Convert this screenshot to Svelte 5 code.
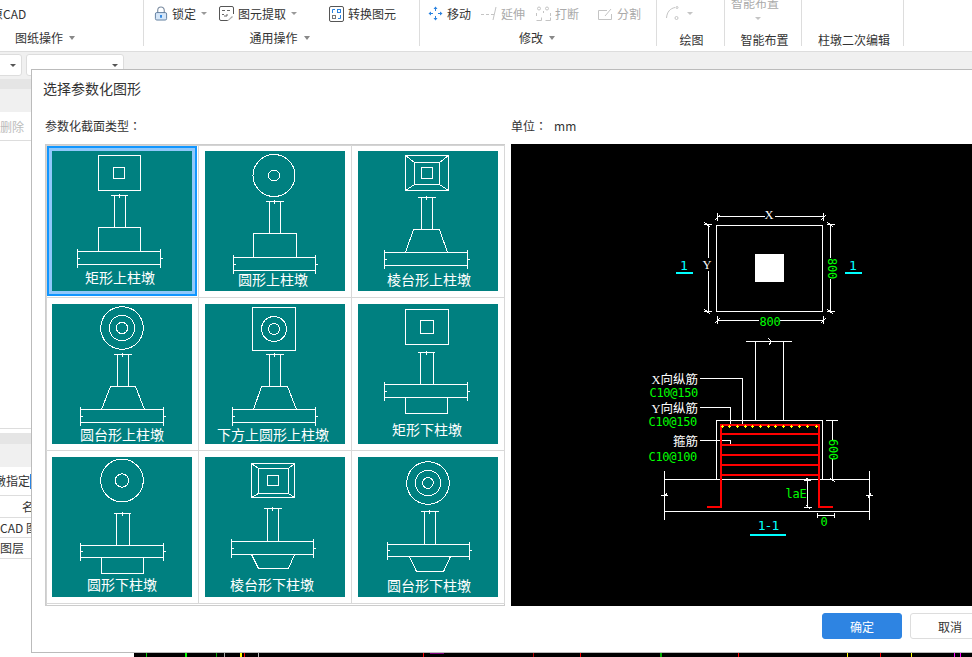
<script>
  const p = (v) => Math.floor(v) + 0.5;
  const rect = (x1, y1, x2, y2) => `M${p(x1)} ${p(y1)}H${p(x2)}V${p(y2)}H${p(x1)}Z`;
  const slab = (x1, x2, y1, y2) => {
    const m = p((y1 + y2) / 2 + 0.5);
    return (
      rect(x1, y1, x2, y2) +
      `M${p(x1)} ${p(y1 - 3)}V${p(y2 + 3)}M${p(x2)} ${p(y1 - 3)}V${p(y2 + 3)}` +
      `M${p(x1 - 1)} ${m}H${p(x1 + 2)}M${p(x2 - 1)} ${m}H${p(x2 + 2)}`
    );
  };
  const col = (a, b, t, e, d1, d2) => {
    const m = p((d1 + d2) / 2);
    return `M${p(d1)} ${p(t)}H${p(d2)}M${p(a)} ${p(t)}V${p(e)}M${p(b)} ${p(t)}V${p(e)}M${m} ${p(t - 2)}V${p(t + 2)}`;
  };
  const trap = (a, b, t, c, d, e, closed) =>
    `M${p(c)} ${p(e)}L${p(a)} ${p(t)}H${p(b)}L${p(d)} ${p(e)}${closed ? 'Z' : ''}`;
  const diag = (o, m) =>
    `M${p(o[0])} ${p(o[1])}L${p(m[0])} ${p(m[1])}M${p(o[2])} ${p(o[1])}L${p(m[2])} ${p(m[1])}` +
    `M${p(o[0])} ${p(o[3])}L${p(m[0])} ${p(m[3])}M${p(o[2])} ${p(o[3])}L${p(m[2])} ${p(m[3])}`;

  const cells = [
    { t: '矩形上柱墩', x: 68, y: 132, c: [],
      d: rect(46, 4, 88, 39) + rect(61, 16, 72, 27) + col(62.7, 73.3, 44, 76, 58.7, 75.7) + rect(46, 76, 88, 100) + slab(25, 108, 100, 113) },
    { t: '圆形上柱墩', x: 68, y: 134, c: [[69, 24.5, 21], [69, 24.5, 5.5]],
      d: col(64.3, 75.3, 50, 82, 60.3, 78.7) + rect(48, 82, 91, 106) + slab(28, 110, 106, 119) },
    { t: '棱台形上柱墩', x: 71, y: 134, c: [],
      d: rect(47, 4, 90, 39) + rect(56, 11, 81, 33) + rect(63, 16, 74, 27) + diag([47, 4, 90, 39], [56, 11, 81, 33]) +
        col(63.3, 74.3, 46, 78, 59, 77) + trap(55.3, 81.7, 78, 47.3, 89.7, 101) + slab(26, 109, 101, 114) },
    { t: '圆台形上柱墩', x: 70, y: 136, c: [[70, 24, 21.3], [70, 24, 12.7], [70, 24, 5.7]],
      d: col(65.3, 76.3, 50, 82, 61.3, 79.3) + trap(58.7, 83.7, 82, 49.3, 92.7, 105) + slab(28, 111, 105, 118) },
    { t: '下方上圆形上柱墩', x: 68, y: 136, c: [[69, 25, 12.5], [69, 25, 5.5]],
      d: rect(47, 3, 90, 46) + col(64.3, 75.3, 50, 82, 60.3, 78.7) + trap(56.7, 82, 82, 48.3, 91.7, 105) + slab(27, 110, 105, 118) },
    { t: '矩形下柱墩', x: 69, y: 131, c: [],
      d: rect(47, 5, 90, 40) + rect(62, 16, 75, 29) + col(62.3, 75.7, 48, 80, 59.3, 76.7) + slab(26, 109, 80, 93) + rect(47, 93, 89, 109) },
    { t: '圆形下柱墩', x: 70, y: 133, c: [[70, 23.5, 21.3], [70, 23.5, 6.7]],
      d: col(64.3, 77.3, 56, 88, 61.3, 78.7) + slab(28, 111, 88, 100) + rect(49, 100, 91, 116) },
    { t: '棱台形下柱墩', x: 67, y: 133, c: [],
      d: rect(46, 6, 89, 40) + rect(53, 11, 83, 36) + rect(62, 18, 73, 28) + diag([46, 6, 89, 40], [53, 11, 83, 36]) +
        col(62.3, 73.3, 51, 84, 58.3, 76.7) + slab(26, 108, 84, 97) + trap(46.3, 89.7, 97, 53.3, 83.3, 111, true) },
    { t: '圆台形下柱墩', x: 71, y: 134, c: [[70, 26, 21.3], [70, 26, 12.7], [70, 26, 5.3]],
      d: col(66.3, 77.7, 54, 87, 62.3, 80.3) + slab(29, 111, 87, 99) + trap(51.3, 92.7, 99, 58.3, 85, 114, true) }
  ];

  const dots = [247, 268, 292, 316, 337, 361, 385, 406, 430, 454, 478, 502, 529].map((v) => Math.round(640 + v / 3));
  const stirrups = [434, 445, 455, 465, 475];
  const marks = [
    [146, '#0c0', 1], [185, '#0f0', 2], [216, '#0a0', 1], [224, '#aaa', 1], [240, '#ff0', 2], [244, '#f00', 1], [258, '#bbb', 1],
    [423, '#f00', 1], [533, '#b00', 1], [580, '#f00', 1], [660, '#0a0', 2], [738, '#f00', 1], [847, '#ff0', 1], [880, '#f00', 1],
    [911, '#ff0', 1], [954, '#f0f', 1], [960, '#f0f', 1]
  ];
</script>

<div class="page">
  <header class="ribbon">
    <section class="group g1">
      <div class="row"><span class="cad">原CAD</span></div>
      <div class="label">图纸操作<i class="caret"></i></div>
    </section>

    <section class="group g2">
      <div class="row">
        <svg class="ic" width="14" height="17" viewBox="0 0 15 17">
          <path d="M4 8V5a3.500 3.500 0 0 1 7 0v3" fill="none" stroke="#7a8ba0" stroke-width="1.200" />
          <rect x="1.500" y="7.500" width="12" height="8" rx="1.500" fill="#d5e6f8" stroke="#5c7b9c" />
          <path d="M7.500 10v3" stroke="#2a83e0" stroke-width="2" />
        </svg>
        <span class="tx">锁定</span><i class="caret sm"></i>
        <svg class="ic m12" width="15" height="16" viewBox="0 0 15 16">
          <path d="M9 14.500H2a1.500 1.500 0 0 1-1.500-1.500V2A1.500 1.500 0 0 1 2 .5h11A1.500 1.500 0 0 1 14.500 2v6" fill="none" stroke="#555" />
          <path d="M3 4.500h3M8 4.500h3M3 8.500h2M8 8v2H5" fill="none" stroke="#666" />
          <path d="M8 15l5-5 1 1-5 4z" fill="#aaa" />
        </svg>
        <span class="tx">图元提取</span><i class="caret sm"></i>
        <svg class="ic m32" width="15" height="16" viewBox="0 0 15 16">
          <rect x=".5" y=".5" width="14" height="15" rx="1.500" fill="none" stroke="#555" />
          <rect x="8.500" y="3.500" width="3" height="3" fill="none" stroke="#2a83e0" />
          <rect x="3.500" y="9.500" width="3" height="3" fill="none" stroke="#777" />
          <path d="M3.500 7V3.500H6M11.500 9v3.500H9" fill="none" stroke="#2a83e0" />
        </svg>
        <span class="tx">转换图元</span>
      </div>
      <div class="label">通用操作<i class="caret"></i></div>
    </section>

    <section class="group g3">
      <div class="row">
        <svg class="ic" width="15" height="15" viewBox="0 0 15 15" fill="none" stroke="#2a83e0">
          <path d="M7.500 3v2M7.500 10v2M3 7.500h2M10 7.500h2" />
          <path d="M7.500 .5l2 2.500h-4zM7.500 14.500l2-2.500h-4zM.5 7.500L3 5.500v4zM14.500 7.500L12 5.500v4z" fill="#2a83e0" stroke="none" />
        </svg>
        <span class="tx">移动</span>
        <svg class="ic m10" width="16" height="15" viewBox="0 0 16 15" fill="none" stroke="#c4c4c4">
          <path d="M0 8.500h3M5 8.500h3M10 8.500h3M15 1l-3 13" />
        </svg>
        <span class="tx off">延伸</span>
        <svg class="ic m11" width="15" height="15" viewBox="0 0 15 15" fill="none" stroke="#c4c4c4">
          <circle cx="3" cy="2.500" r="1.500" /><circle cx="11" cy="2.500" r="1.500" />
          <path d="M.5 10v-3M.5 14.500h5v-3M14.500 10v-3M9.500 14.500h5v-3M7.500 5v2" />
        </svg>
        <span class="tx off">打断</span>
        <svg class="ic m20" width="15" height="14" viewBox="0 0 15 14" fill="none" stroke="#c4c4c4">
          <path d="M9 3.500H.5v9h13V7M7 9l6-7" />
        </svg>
        <span class="tx off">分割</span>
      </div>
      <div class="label">修改<i class="caret"></i></div>
    </section>

    <section class="group g4">
      <div class="row">
        <svg class="ic" width="15" height="15" viewBox="0 0 15 15" fill="none" stroke="#c4c4c4">
          <path d="M1.500 12C2 6 5 2.500 10 1.500" /><circle cx="12" cy="1.500" r="1" /><circle cx="11.500" cy="12" r="1.500" />
        </svg>
        <i class="caret sm off m7"></i>
      </div>
      <div class="label low">绘图</div>
    </section>

    <section class="group g5">
      <div class="row">
        <div class="stack"><span class="tx off">智能布置</span><i class="caret sm off"></i></div>
      </div>
      <div class="label low">智能布置</div>
    </section>

    <section class="group g6">
      <div class="row"></div>
      <div class="label low">柱墩二次编辑</div>
    </section>
  </header>

  <div class="band">
    <div class="select s1"><i class="caret sm dark"></i></div>
    <div class="select s2"><i class="caret sm dark"></i></div>
  </div>

  <div class="workspace">
    <aside class="side">
      <div class="bar"></div>
      <div class="sub"></div>
      <div class="action">删除</div>
      <div class="gap"></div>
      <div class="thead"></div>
      <div class="bar"></div>
      <div class="sub"></div>
      <div class="tr h1"><span class="clip">墩指定</span><b class="cursor"></b></div>
      <div class="tr h2"><span class="name">名称</span></div>
      <div class="tr h3"><span>CAD 图纸</span></div>
      <div class="tr h4"><span>图层</span></div>
    </aside>
    <div class="canvas">
      <svg class="marks" width="838" height="4" viewBox="134 653 838 4">
        {#each marks as m}
          <rect x={m[0]} y="653" width={m[2]} height="4" fill={m[1]} />
        {/each}
        <path d="M430 653h14" stroke="#f0f" />
      </svg>
    </div>
  </div>

  <div class="dialog">
    <div class="title">选择参数化图形</div>
    <div class="meta">
      <span class="type">参数化截面类型<span class="colon">：</span></span>
      <span>单位<span class="colon">：</span></span><span class="unit">mm</span>
    </div>
    <div class="body">
      <div class="grid">
        {#each cells as c, i}
          <div class="cell">
            <svg class="thumb" class:selected={i === 0} width="140" height="140" viewBox="0 0 140 140">
              <path d={c.d} fill="none" stroke="#fff" />
              {#each c.c as o}
                <circle cx={o[0]} cy={o[1]} r={o[2]} fill="none" stroke="#fff" />
              {/each}
              <text x={c.x} y={c.y} text-anchor="middle">{c.t}</text>
            </svg>
          </div>
        {/each}
      </div>

      <svg class="preview" width="461" height="462" viewBox="511 144 461 462">
        <g class="wire">
          <!-- plan -->
          <path d="M716.500 225.500H822.500V311.500H716.500Z" />
          <path d="M717.500 216.500H765M775 216.500H823.500M717.500 213V221M823.500 213V221M715 220l5-5M821 220l5-5" />
          <path d="M708.500 224V258M708.500 271V312M704 224.500H712M704 311.500H712M704 222l6 5M704 309l6 5" />
          <path d="M830.500 224V258M830.500 279V312M827 224.500H835M827 311.500H835M827 222l6 5M827 309l6 5" />
          <path d="M717.500 320.500H759M780 320.500H823.500M717.500 316V324M823.500 316V324M715 323l5-5M821 323l5-5" />
          <!-- section -->
          <path d="M746 341.500H792M755.500 341.500V420.500M783.500 341.500V420.500M768 338l3 3-2 4 2-2" />
          <path d="M716.500 479.500V420.500H822.500V479.500" />
          <path d="M664 479.500H869M664 511.500H869M664.500 471V520M869.500 471V520M661 495.500H668M866 495.500H873M667 493l-3 5M871 493l-3 5" />
          <path d="M700 378.500H742.500V426M700 407.500H730.500V425M700 440.500H730.500V445" />
          <path d="M832.500 421V440M832.500 459V479M826 420.500H838M830 478l5 4" />
          <path d="M807.500 478V508M804 480h7M804 507.500H812M806 478l4 3M806 505l4 4" />
          <path d="M817 515.500H835M817.500 513V518M834.500 513V518" />
        </g>
        <rect x="755" y="254" width="29" height="28" fill="#fff" />

        <g class="rebar">
          <path d="M707 507H721V425H819V507H833" />
          {#each stirrups as y}
            <path d="M721 {y}H819" />
          {/each}
        </g>
        {#each dots as x}
          <path class="dot" d="M{x - 1} 426.500H{x + 2}M{x + 0.5} 425V428" />
        {/each}

        <g class="cyan">
          <text x="684" y="270" text-anchor="middle">1</text>
          <text x="853" y="270" text-anchor="middle">1</text>
          <text class="tight" x="768" y="530" text-anchor="middle">1-1</text>
          <path d="M676 273H693M845 273H862M750 535H786" />
        </g>

        <g class="white-t">
          <text x="769" y="219" text-anchor="middle">X</text>
          <text x="707" y="269" text-anchor="middle">Y</text>
          <text x="698" y="384" text-anchor="end">X向纵筋</text>
          <text x="698" y="413" text-anchor="end">Y向纵筋</text>
          <text x="698" y="446" text-anchor="end">箍筋</text>
        </g>

        <g class="green">
          <text x="770" y="326" text-anchor="middle">800</text>
          <text transform="translate(828 268.500) rotate(90)" text-anchor="middle">800</text>
          <text x="698" y="397" text-anchor="end">C10@150</text>
          <text x="697" y="426" text-anchor="end">C10@150</text>
          <text x="697" y="461" text-anchor="end">C10@100</text>
          <text transform="translate(829 449.500) rotate(90)" text-anchor="middle">600</text>
          <text x="796" y="498" text-anchor="middle">laE</text>
          <text x="824" y="526" text-anchor="middle">0</text>
        </g>
      </svg>
    </div>
    <div class="footer">
      <button class="ok">确定</button>
      <button class="cancel">取消</button>
    </div>
  </div>
</div>

<style>
  :global(body) {
    margin: 0;
    overflow: hidden;
    background: #fff;
  }
  .page {
    position: relative;
    width: 972px;
    height: 657px;
    overflow: hidden;
    display: flex;
    flex-direction: column;
    font: 12px/16px "Noto Sans CJK SC", "Liberation Sans", sans-serif;
    color: #333;
  }
  .ribbon {
    display: flex;
    flex: none;
    height: 51px;
    border-bottom: 1px solid #ddd;
    background: #fff;
    overflow: hidden;
    box-sizing: content-box;
  }
  .group {
    height: 46px;
    border-right: 1px solid #ddd;
    box-sizing: border-box;
    flex: none;
  }
  .g1 { width: 144px; }
  .g2 { width: 276px; padding-left: 10px; }
  .g3 { width: 237px; padding-left: 8px; }
  .g4 { width: 68px; padding-left: 8px; }
  .g5 { width: 77px; padding-left: 6px; }
  .g6 { width: 102px; }
  .row {
    display: flex;
    align-items: center;
    height: 27px;
  }
  .cad { margin-left: -9px; }
  .ic { flex: none; margin-right: 4px; }
  .m7 { margin-left: 7px; }
  .m10 { margin-left: 10px; }
  .m11 { margin-left: 11px; }
  .m12 { margin-left: 12px; }
  .m20 { margin-left: 19px; }
  .m32 { margin-left: 32px; }
  .tx { white-space: nowrap; }
  .g2 .ic { margin-right: 4px; }
  .off { color: #aaa; }
  .stack {
    display: flex;
    flex-direction: column;
    align-items: center;
    margin-top: -13px;
  }
  .stack .caret { margin: 6px 0 0; }
  .label {
    display: flex;
    align-items: center;
    justify-content: center;
    height: 18px;
    margin-top: 2px;
    white-space: nowrap;
    color: #333;
  }
  .g1 .label { justify-content: flex-start; padding-left: 15px; }
  .g2 .label { margin-left: -14px; }
  .g3 .label { margin-left: -10px; }
  .label.low { margin-top: 4px; }
  .g4 .label { margin-left: -6px; }
  .g5 .label { margin-left: -3px; }
  .g6 .label { padding-left: 3px; }
  .caret {
    display: block;
    width: 0;
    height: 0;
    margin-left: 6px;
    border-left: 3.5px solid transparent;
    border-right: 3.5px solid transparent;
    border-top: 4px solid #888;
  }
  .caret.sm {
    margin-left: 5px;
    border-left-width: 3px;
    border-right-width: 3px;
    border-top: 3px solid #999;
  }
  .caret.sm.off { border-top-color: #c4c4c4; }
  .caret.sm.dark { border-top-color: #555; margin: 0; }
  .caret.sm.off.m7 { margin-left: 3px; }

  .band {
    display: flex;
    flex: none;
    gap: 4px;
    height: 27px;
    padding-top: 2px;
    margin-left: -10px;
    background: #f0f0f0;
    box-sizing: border-box;
  }
  .select {
    display: flex;
    align-items: center;
    justify-content: flex-end;
    height: 22px;
    padding-right: 5px;
    border: 1px solid #ddd;
    border-radius: 3px;
    background: #fff;
    box-sizing: border-box;
  }
  .s1 { width: 32px; }
  .s2 { width: 98px; }

  .workspace {
    flex: 1;
    display: flex;
    min-height: 0;
  }
  .side {
    width: 134px;
    flex: none;
    display: flex;
    flex-direction: column;
    background: #fff;
    overflow: hidden;
  }
  .bar { height: 11px; flex: none; background: #e5e5e5; }
  .side > .bar:first-child { height: 10px; }
  .sub { height: 23px; flex: none; background: #f0f0f0; }
  .action {
    height: 28px;
    flex: none;
    line-height: 29px;
    color: #bbb;
    border-bottom: 1px solid #ddd;
  }
  .gap { height: 287px; flex: none; }
  .thead { height: 4px; flex: none; border-top: 1px solid #ddd; box-sizing: content-box; }
  .tr {
    flex: none;
    display: flex;
    align-items: center;
    border-bottom: 1px solid #ddd;
    box-sizing: content-box;
    white-space: nowrap;
  }
  .h1 { height: 28px; }
  .h2 { height: 21px; }
  .h3 { height: 19px; }
  .h4 { height: 20px; }
  .clip { margin-left: -6px; }
  .cursor { width: 1px; height: 15px; background: #2a83e0; }
  .name { margin-left: 22px; }
  .canvas {
    flex: 1;
    background: #000;
    display: flex;
    align-items: flex-end;
  }
  .marks { display: block; }

  .dialog {
    position: absolute;
    left: 31px;
    top: 69px;
    width: 1000px;
    height: 584px;
    box-sizing: border-box;
    border: 1px solid #bbb;
    background: #fff;
  }
  .title {
    height: 37px;
    padding-left: 11px;
    font-size: 14px;
    line-height: 37px;
    color: #333;
  }
  .meta {
    display: flex;
    align-items: center;
    height: 37px;
    padding: 0 0 0 13px;
    box-sizing: border-box;
  }
  .colon { font-family: "Noto Sans CJK TC", sans-serif; }
  .type { width: 466px; flex: none; }
  .unit { margin-left: 7px; }
  .body {
    display: flex;
    align-items: flex-start;
    padding-left: 13px;
  }
  .grid {
    display: grid;
    grid-template-columns: repeat(3, 153px);
    grid-auto-rows: 153px;
    flex: none;
    width: 460px;
    height: 462px;
    box-sizing: border-box;
    border: 1px solid #ccc;
    padding-bottom: 1px;
    box-shadow: inset 1px 1px 0 #d4d4d4;
  }
  .cell {
    box-sizing: border-box;
    padding: 6px;
    border-right: 1px solid #d8d8d8;
    border-bottom: 1px solid #d8d8d8;
  }
  .thumb {
    display: block;
    background: #008080;
    shape-rendering: crispEdges;
  }
  .thumb.selected {
    box-shadow: 0 0 0 3px #90c8fb, 0 0 0 5px #1196ff;
  }
  .thumb text {
    fill: #fff;
    font: 14px "Noto Sans CJK SC", sans-serif;
  }
  .preview {
    display: block;
    flex: none;
    margin-left: 6px;
    background: #000;
    shape-rendering: crispEdges;
  }
  .wire path { fill: none; stroke: #fff; }
  .rebar path { fill: none; stroke: #f00; stroke-width: 2; }
  .dot { fill: none; stroke: #ff0; }
  .cyan path { fill: none; stroke: #0ff; stroke-width: 2; }
  .cyan text {
    fill: #0ff;
    font: 13px "DejaVu Sans Mono", monospace;
  }
  .cyan .tight { letter-spacing: -1px; }
  .white-t text {
    fill: #fff;
    font: 12.500px "Liberation Serif", "Noto Sans CJK SC", serif;
  }
  .green text {
    fill: #0f0;
    font: 12px "DejaVu Sans Mono", monospace;
    letter-spacing: -0.300px;
  }
  .footer {
    display: flex;
    gap: 8px;
    margin-top: 7px;
    padding-left: 790px;
  }
  .footer button {
    width: 80px;
    height: 26px;
    padding: 0;
    flex: none;
    border-radius: 3px;
    font: 12px "Noto Sans CJK SC", sans-serif;
    box-sizing: border-box;
  }
  .ok { background: #2e84e2; color: #fff; border: 1px solid #2e84e2; }
  .cancel { background: #fff; color: #333; border: 1px solid #ddd; }
</style>
